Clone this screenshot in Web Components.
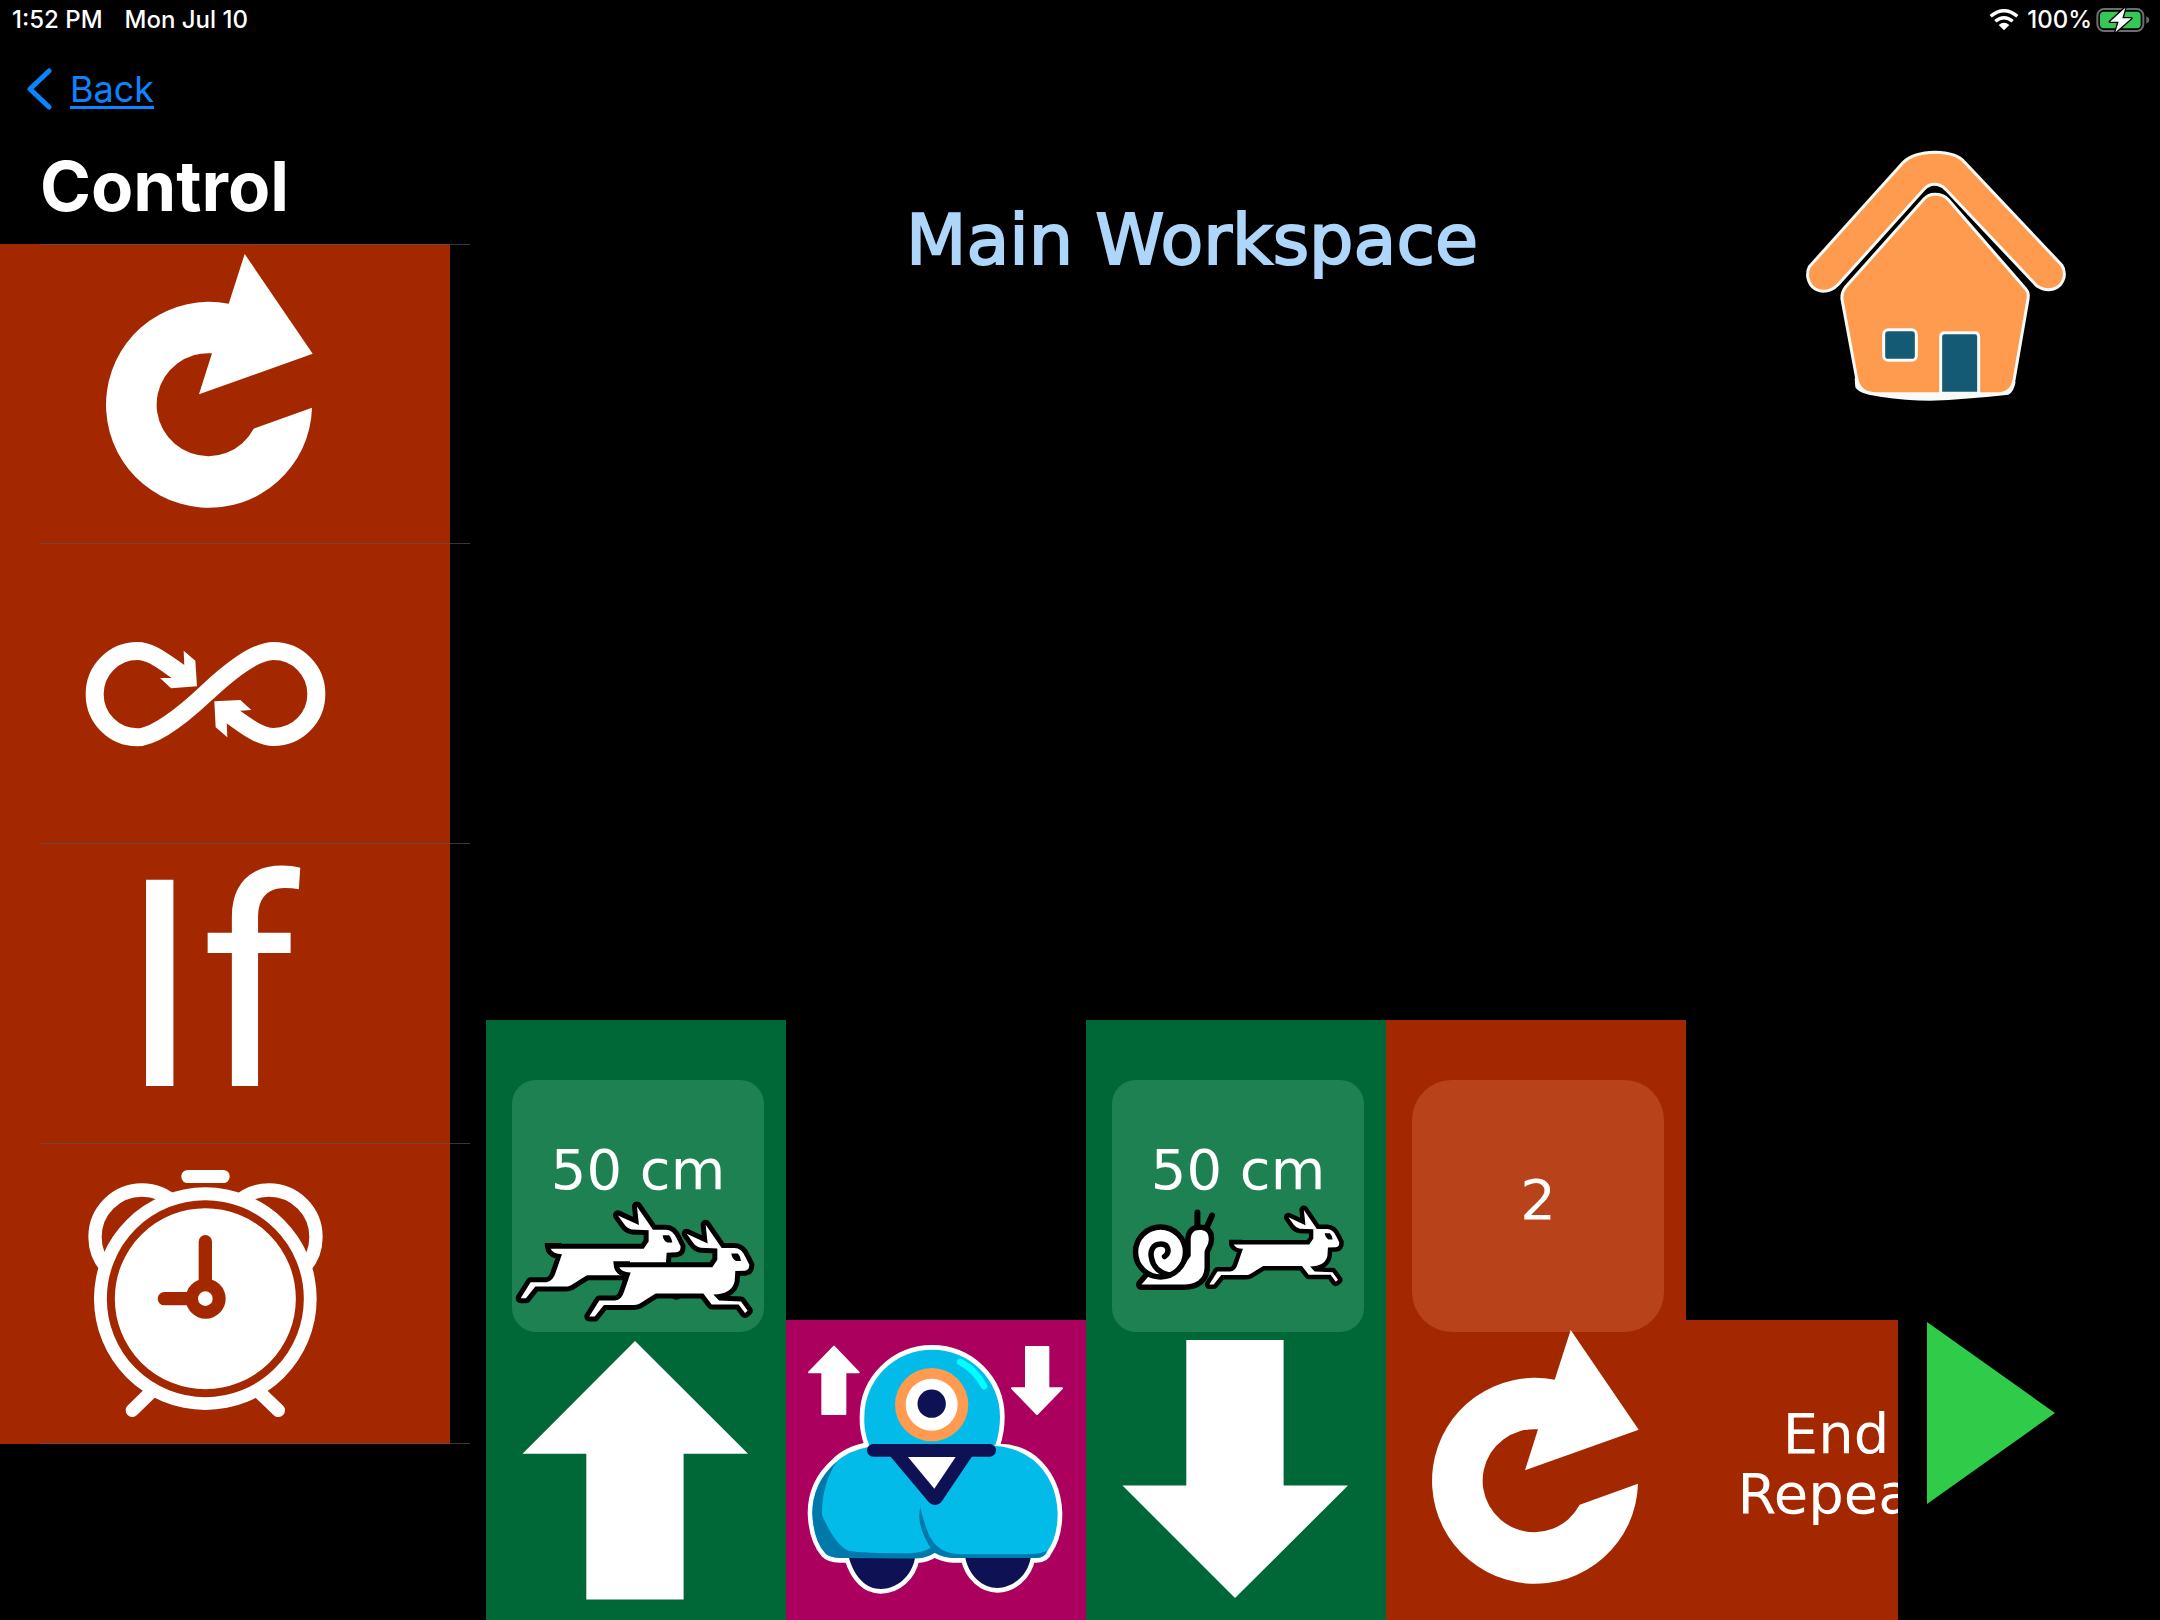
<!DOCTYPE html>
<html lang="en">
<head>
<meta charset="utf-8">
<title>Main Workspace</title>
<style>
html { background: #000; }
body { margin: 0; background: #000; color: #fff; font-family: "DejaVu Sans", sans-serif; }
</style>
</head>
<body>
<block-app></block-app>

<script>
const ART = {
  repeat: `<svg viewBox="0 0 300 300" aria-hidden="true"><path fill="#fff" d="M168.7 59.7L184.7 10 252.7 109.7 139 150.3 152 109.3A51.5 51.5 0 1 0 193.7 184.7L252 163.7A103 103 0 1 1 168.7 59.7Z"/></svg>`,
  forever: `<svg viewBox="0 0 300 300" aria-hidden="true"><g transform="translate(0 66) scale(.33333)"><path fill="none" stroke="#fff" stroke-width="54" d="M368 194C310 155 275 123 232 123A128 129.500 0 0 0 232 382C285 382 372 312 436 252C508 184 585 123 641 123A128 129 0 0 1 641 381C600 381 560 350 505 310"/><path fill="#fff" d="M371 122L406 152 411 229 333 235 300 204 345 204 373 170ZM463 274L541 270 574 300 530 303 500 333 502 382 467 352Z"/></g></svg>`,
  clock: `<svg viewBox="0 0 300 300" aria-hidden="true"><g transform="translate(0 -4) scale(.33333)"><g fill="none" stroke="#fff" stroke-width="40"><circle cx="246" cy="291" r="141"/><circle cx="627" cy="291" r="141"/><path stroke-linecap="round" d="M217 811L300 730M655 811L570 730"/></g><circle cx="436" cy="476" r="334" fill="#fff"/><circle cx="436" cy="476" r="283.500" fill="none" stroke="#a32800" stroke-width="24"/><rect x="364" y="90" width="145" height="39" rx="19" fill="#fff"/><path d="M436 305V476H313" fill="none" stroke="#a32800" stroke-width="40" stroke-linecap="round"/><circle cx="437" cy="476" r="60" fill="#a32800"/><circle cx="436" cy="476" r="22" fill="#fff"/></g></svg>`,
  forward: `<svg viewBox="0 0 300 300" aria-hidden="true"><path fill="#fff" d="M149 21L262 133.700H197.600V279.500H100.300V133.700H36.500Z"/></svg>`,
  backward: `<svg viewBox="0 0 300 300" aria-hidden="true"><path fill="#fff" d="M100.300 20H197.600V165.500H262L149 278 36.500 165.500H100.300Z"/></svg>`,
  robot: `<svg viewBox="0 0 300 300" aria-hidden="true"><g transform="translate(-6 -10) scale(.33333)">
    <g fill="#fff" stroke="#fff" stroke-width="28" stroke-linejoin="round">
      <path d="M268 406C250 360 253 330 253 320A203.500 201 0 0 1 660 320Q660 365 646 406Z"/>
      <path d="M268 410Q200 422 165 460Q97 520 97 610Q100 690 136 730Q148 743 180 744L410 745Q440 744 464 728Q490 743 520 744L770 744Q795 744 803 722Q833 680 833 610Q830 510 760 450Q710 412 648 416Z"/>
      <path d="M207 744C225 805 260 837 302 837C350 837 395 800 405 744ZM556 744C568 800 610 834 652 834C695 834 742 800 752 744Z"/>
    </g>
    <path fill="#0e1154" d="M207 744C225 805 260 837 302 837C350 837 395 800 405 744ZM556 744C568 800 610 834 652 834C695 834 742 800 752 744Z"/>
    <g fill="#03bbe8"><path d="M268 406C250 360 253 330 253 320A203.500 201 0 0 1 660 320Q660 365 646 406Z"/>
    <path d="M268 410Q200 422 165 460Q97 520 97 610Q100 690 136 730Q148 743 180 744L410 745Q440 744 464 728Q490 743 520 744L770 744Q795 744 803 722Q833 680 833 610Q830 510 760 450Q710 412 648 408Z"/></g>
    <path fill="#0078aa" d="M172 453Q97 520 97 610Q100 690 136 730Q148 743 180 744L410 745Q440 744 464 728Q490 743 520 744H770Q792 744 801 722Q785 732 740 733H540C510 731 490 724 470 707C444 684 430 630 421 592C412 630 424 670 452 714Q425 729 390 730Q250 730 205 722Q165 705 126 615Q125 520 172 453Z"/>
    <circle cx="455" cy="284" r="110" fill="#ff9b50"/><circle cx="455" cy="284" r="78" fill="#fff"/><circle cx="455" cy="281" r="42.500" fill="#0e1154"/>
    <path d="M541 156Q585 178 612 228" fill="none" stroke="#00ffff" stroke-width="20" stroke-linecap="round"/>
    <rect x="261" y="402" width="387" height="38" rx="19" fill="#0e1154"/>
    <path fill="#0e1154" d="M330 438L446 576Q465 596 484 576L577 438Z"/><path fill="#fff" d="M384 441H527L463 536Z"/>
    <path fill="#fff" stroke="#fff" stroke-width="6" stroke-linejoin="round" d="M162 110L236 187H196V312H127V187H87ZM738 111H805V235H846L771 312 696 235H738Z"/>
  </g></svg>`
};

/* White running hare with a heavy black outline; drawn on the speed panels. */
const HARE_BODY = "M418 661H697L712 642V613L662 611Q648 609 640 599L620 575 683 600 677 552 725 612H763Q785 612 797 636L808 655Q808 669 795 670L766 671L764 697Q756 730 700 731L717 747 783 749 803 773 795 779 776 757H695L670 729H527L478 755Q470 758 460 758H372L344 788H328L358 747H405Q425 745 433 722L452 675Q425 674 418 661Z";
const HARE = (transform, width) => `<g transform="${transform}">
  <path d="M400 646H450V685H440Q402 684 400 646Z"/>
  <path vector-effect="non-scaling-stroke" stroke="#000" stroke-width="${width}" stroke-linejoin="round" d="${HARE_BODY}"/>
  <path fill="#fff" d="${HARE_BODY}"/>
  <path d="M754 626H773Q780 631 783 645H768Q756 640 754 626Z"/></g>`;

const SNAIL_BODY = "M29.500 204.500H72C85 204.500 92.500 198 92.500 187V173C92.500 168 96.700 166 96.700 159C96.700 152 93 150 87.500 150C82 150 78.700 153 78.700 160V176L70 188 36 197Z";
const SPEED = {
  fast: `<svg viewBox="0 118 252 134" aria-hidden="true">${HARE("translate(-100.7 -88.3) scale(.33333 .38903)", 10)}${HARE("translate(-32 -70) scale(.33333 .38903)", 10)}</svg>`,
  slow: `<svg viewBox="0 118 252 134" aria-hidden="true">
    <path d="M85.400 132.500V148M100 135.500L94 149" fill="none" stroke="#000" stroke-width="6" stroke-linecap="round"/>
    <path d="${SNAIL_BODY}" stroke="#000" stroke-width="11" stroke-linejoin="round"/>
    <path d="${SNAIL_BODY}" fill="#fff"/>
    <circle cx="48.500" cy="172" r="25" fill="#fff" stroke="#000" stroke-width="5.500"/>
    <path d="M52.500 176.500C58 173 57 164 49 164C40 164 38 172 39.500 178C41 187 48 193 57 195" fill="none" stroke="#000" stroke-width="5.500" stroke-linecap="round"/>
    ${HARE("translate(8.5 -44.5) scale(.27083 .31609)", 9)}</svg>`
};

class ShadowElement extends HTMLElement {
  connectedCallback() {
    if (this.shadowRoot) return;
    this.attachShadow({ mode: "open" }).innerHTML = this.render();
  }
}

customElements.define("status-bar", class extends ShadowElement {
  render() {
    return `<style>
      :host { display: flex; align-items: center; gap: 22px; height: 40px; padding: 0 10px 0 12px;
        font: 500 24px/40px Inter, sans-serif; color: #fff; }
      .power { display: flex; align-items: center; gap: 4px; margin-left: auto; }
      .wifi { margin-right: 4px; }
      svg { display: block; }
    </style>
    <span>1:52 PM</span><span>Mon Jul 10</span>
    <div class="power">
      <svg class="wifi" width="30" height="22" viewBox="0 0 90 66" aria-label="Wi-Fi"><g fill="none" stroke="#fff" stroke-width="10"><path d="M5 22Q45 -12 85 22"/><path d="M19 37Q45 15 71 37"/></g><path fill="#fff" d="M45 64L29 48Q45 34 61 48Z"/></svg>
      <span>100%</span>
      <svg width="54" height="26" viewBox="0 0 162 78" aria-label="Battery charging"><rect x="4" y="6" width="138" height="66" rx="20" fill="none" stroke="#6d6d6f" stroke-width="6"/><rect x="12" y="14" width="122" height="50" rx="12" fill="#35c759"/><path d="M151 28Q160 32 160 39T151 50Z" fill="#6d6d6f"/><path d="M88 2L42 44H68L58 76 106 34H79Z" fill="#fff" stroke="#000" stroke-width="8" paint-order="stroke" stroke-linejoin="round"/></svg>
    </div>`;
  }
});

customElements.define("block-menu", class extends ShadowElement {
  render() {
    return `<style>
      :host { display: block; width: 486px; flex: none; }
      a { display: flex; align-items: center; gap: 18px; height: 46px; padding: 26px 0 27px 26px;
        font: 36px/46px Inter, sans-serif; color: #0a84ff; text-decoration: none; }
      a span { text-decoration: underline; text-decoration-thickness: 3px; text-underline-offset: 4px; text-decoration-skip-ink: none; }
      h1 { margin: 0; padding: 5px 0 16px 40px; font: 700 69px/84px Inter, sans-serif; }
      ul { margin: 0; padding: 0; list-style: none; }
    </style>
    <a href="#categories"><svg width="26" height="44" viewBox="0 0 26 44" aria-hidden="true"><path d="M23 4L4 22 23 40" fill="none" stroke="#0a84ff" stroke-width="5" stroke-linecap="round" stroke-linejoin="round"/></svg><span>Back</span></a>
    <h1>Control</h1>
    <ul>
      <menu-block first label="Repeat" art="repeat"></menu-block>
      <menu-block label="Repeat forever" art="forever"></menu-block>
      <menu-block><span>If</span></menu-block>
      <menu-block label="Wait" art="clock"></menu-block>
    </ul>`;
  }
});

customElements.define("menu-block", class extends ShadowElement {
  render() {
    const label = this.getAttribute("label");
    this.setAttribute("role", "listitem");
    return `<style>
      :host { --line: linear-gradient(rgba(84, 84, 88, .65), rgba(84, 84, 88, .65)); --top: 0px; display: block; width: 470px;
        background: var(--line) 40px 100% / 430px 1px no-repeat,
          var(--line) 40px 0 / 430px var(--top) no-repeat,
          linear-gradient(#a32800, #a32800) 0 0 / 450px 100% no-repeat; }
      :host([first]) { --top: 1px; }
      button { display: block; width: 450px; height: 300px; padding: 0 90px 0 60px; border: 0; background: none; color: #fff;
        font: 290px/286px Roboto, sans-serif; text-align: center; }
      svg { display: block; width: 300px; height: 300px; }
      ::slotted(span) { display: block; height: 300px; }
    </style>
    <button type="button"${label ? ` aria-label="${label}"` : ""}>${ART[this.getAttribute("art")] || "<slot></slot>"}</button>`;
  }
});

customElements.define("program-block", class extends ShadowElement {
  render() {
    const speed = SPEED[this.getAttribute("speed")] || "";
    const art = ART[this.getAttribute("art")];
    return `<style>
      :host { --bg: #a32800; --panel: #b8431a; --radius: 40px; display: block; flex: none; width: 300px; background: var(--bg); color: #fff; }
      :host([kind="drive"]) { --bg: #006837; --panel: #1e8152; --radius: 24px; }
      :host([kind="look"]) { --bg: #ab005d; }
      .panel { display: flex; flex-direction: column; align-items: center; justify-content: center; box-sizing: border-box;
        width: 252px; height: 252px; margin: 60px 22px -12px 26px; padding: 0 0 12px; border: 0; border-radius: var(--radius);
        background: var(--panel); color: #fff; font: 56px/56px "DejaVu Sans", sans-serif; }
      .panel.speed { justify-content: flex-start; padding: 62px 0 0; }
      .panel svg { display: block; width: 252px; height: 134px; overflow: visible; }
      .wrap { display: flow-root; }
      .art svg { display: block; width: 300px; height: 300px; position: relative; }
      .name { display: flex; flex-direction: column; justify-content: center; box-sizing: border-box; height: 300px; padding-bottom: 12px;
        font: 56px/60px "DejaVu Sans", sans-serif; text-align: center; }
    </style>
    ${this.hasAttribute("panel") ? `<div class="wrap"><button type="button" class="panel${speed ? " speed" : ""}"><slot></slot>${speed}</button><div class="art">${art}</div></div>`
      : art ? `<div class="art">${art}</div>` : `<div class="name"><slot></slot></div>`}`;
  }
});

customElements.define("work-space", class extends ShadowElement {
  render() {
    return `<style>
      :host { display: flex; flex-direction: column; justify-content: space-between; flex: 1; min-width: 0; }
      header { display: grid; grid-template-columns: minmax(0, 1fr) 262px; padding-top: 110px; }
      h2 { grid-area: 1 / 1; margin: 48px 0 0; font: 70px/84px "DejaVu Sans", sans-serif; color: #aed6fb; text-align: center;
        -webkit-text-stroke: 2px #aed6fb; }
      button { display: block; padding: 0; border: 0; background: none; }
      .home { grid-area: 1 / 1 / 2 / 3; justify-self: end; margin-right: 94px; }
      svg { display: block; }
      footer { display: flex; align-items: flex-end; }
      .program { display: flex; align-items: flex-end; flex: 1; min-width: 0; overflow: hidden; }
      .run { flex: none; width: 262px; padding: 0 105px 116px 29px; }
    </style>
    <header>
      <h2>Main Workspace</h2>
      <button type="button" class="home" aria-label="Home"><svg width="260" height="252" viewBox="78 60 780 756" aria-hidden="true">
        <g fill="#ff9b4e" stroke="#f8faf7" stroke-width="9" stroke-linejoin="round">
          <path d="M370 97Q400 68 465 67Q530 68 554 97L845 405Q856 420 852 443Q845 470 820 477Q795 484 770 467L497 178Q482 163 463 163Q446 163 432 178L175 463Q155 484 130 484Q90 480 83 440Q82 420 88 410Z"/>
          <path fill="#f8faf7" stroke="none" d="M224 745L226 772Q236 792 300 800Q380 812 450 812Q560 808 685 794Q702 785 707 755Z"/>
          <path d="M432 207Q445 193 465 193Q490 193 505 209L738 478Q747 486 744 508L702 750Q694 790 655 791H285Q238 790 230 745L186 508Q184 488 196 472Z"/>
          <g fill="#155a74"><rect x="311" y="599" width="98" height="92" rx="14"/><path d="M482 790V620Q482 608 494 608H586Q596 608 596 620V790Z"/></g>
        </g></svg></button>
    </header>
    <footer>
      <div class="program">
        <program-block kind="drive" panel speed="fast" art="forward">50 cm</program-block>
        <program-block kind="look" art="robot"></program-block>
        <program-block kind="drive" panel speed="slow" art="backward">50 cm</program-block>
        <program-block panel art="repeat">2</program-block>
        <program-block>End<br>Repeat</program-block>
      </div>
      <button type="button" class="run" aria-label="Play"><svg width="128" height="182" viewBox="0 0 128 182" aria-hidden="true"><path fill="#2ecc48" d="M0 0L128 91 0 182Z"/></svg></button>
    </footer>`;
  }
});

customElements.define("block-app", class extends ShadowElement {
  render() {
    return `<style>
      :host { display: flex; flex-direction: column; min-height: 100vh; background: #000; }
      main { display: flex; flex: 1; }
    </style>
    <status-bar></status-bar>
    <main><block-menu></block-menu><work-space></work-space></main>`;
  }
});
</script>
</body>
</html>
